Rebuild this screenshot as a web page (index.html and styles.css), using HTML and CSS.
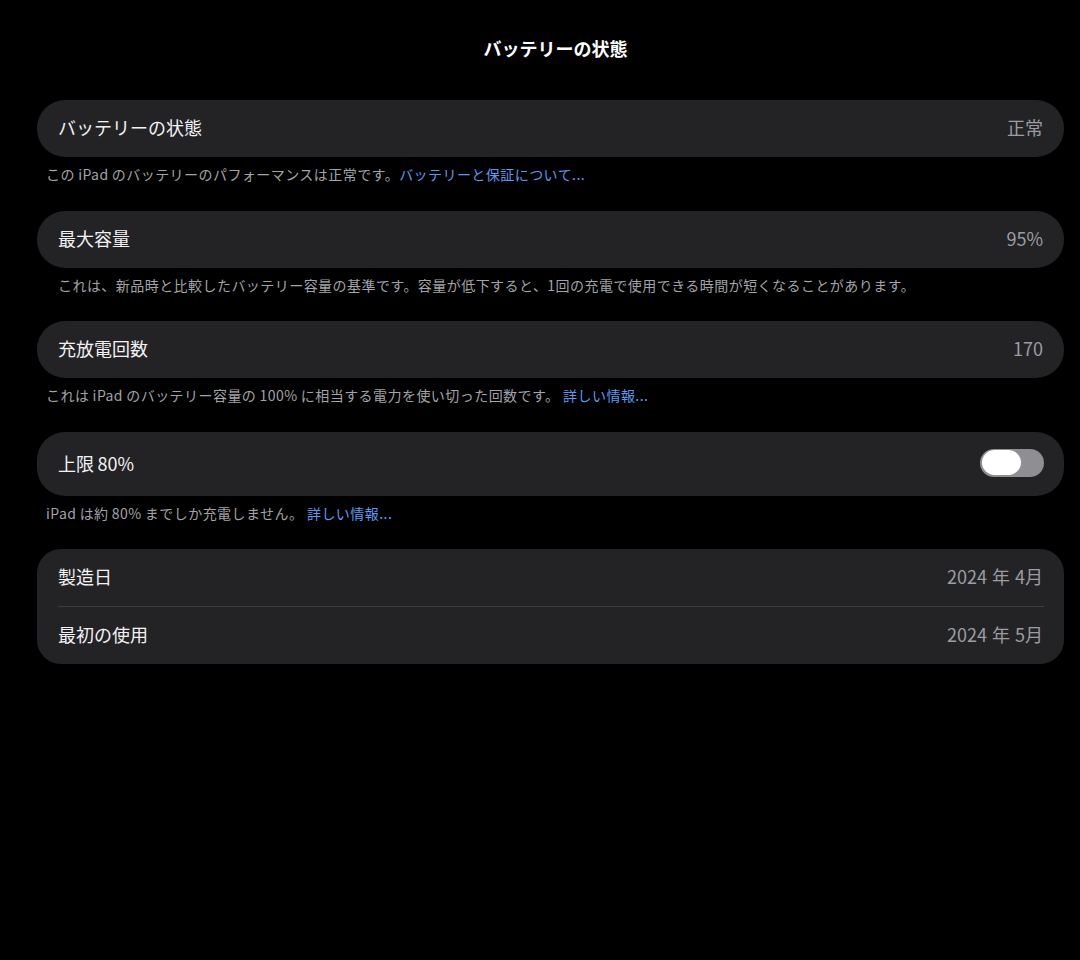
FILE: index.html
```html
<!DOCTYPE html>
<html lang="ja">
<head>
<meta charset="utf-8">
<title>バッテリーの状態</title>
<link rel="stylesheet" href="styles.css">
</head>
<body>
<div class="page">
  <h1 class="title">バッテリーの状態</h1>

  <section class="group">
    <div class="card">
      <div class="row"><span class="label">バッテリーの状態</span><span class="value">正常</span></div>
    </div>
    <p class="footer">この&thinsp;iPad&thinsp;のバッテリーのパフォーマンスは正常です。<a class="link">バッテリーと保証について...</a></p>
  </section>

  <section class="group">
    <div class="card">
      <div class="row"><span class="label">最大容量</span><span class="value">95%</span></div>
    </div>
    <p class="footer indent">これは、新品時と比較したバッテリー容量の基準です。容量が低下すると、1回の充電で使用できる時間が短くなることがあります。</p>
  </section>

  <section class="group">
    <div class="card">
      <div class="row"><span class="label">充放電回数</span><span class="value">170</span></div>
    </div>
    <p class="footer">これは&thinsp;iPad&thinsp;のバッテリー容量の&thinsp;100%&thinsp;に相当する電力を使い切った回数です。 <a class="link">詳しい情報...</a></p>
  </section>

  <section class="group">
    <div class="card">
      <div class="row tall"><span class="label">上限&thinsp;80%</span><span class="toggle"><span class="knob"></span></span></div>
    </div>
    <p class="footer">iPad&thinsp;は約&thinsp;80%&thinsp;までしか充電しません。 <a class="link">詳しい情報...</a></p>
  </section>

  <section class="group">
    <div class="card list">
      <div class="row"><span class="label">製造日</span><span class="value date">2024 年 4月</span></div>
      <div class="sep"></div>
      <div class="row"><span class="label">最初の使用</span><span class="value date">2024 年 5月</span></div>
    </div>
  </section>
</div>
</body>
</html>
```

FILE: styles.css
```css
html, body {
  margin: 0;
  padding: 0;
  background: #000;
}
body {
  font-family: "Noto Sans CJK JP", "Noto Sans", sans-serif;
  color: #f2f2f4;
  width: 1080px;
  height: 960px;
}
.page {
  padding: 36px 16px 0 37px;
}
.title {
  margin: 0 0 40px 0;
  padding-left: 10px;
  font-size: 18px;
  line-height: 24px;
  font-weight: 700;
  text-align: center;
  color: #fff;
}
.group {
  margin-bottom: 25.5px;
}
.card {
  background: #232326;
  border-radius: 28px;
}
.card.list {
  border-radius: 24px;
}
.row {
  height: 57px;
  display: flex;
  align-items: center;
  justify-content: space-between;
  padding: 0 21px 3px 21px;
  box-sizing: border-box;
}
.row.tall {
  height: 64px;
  padding-right: 20px;
  padding-bottom: 2px;
}
.label {
  font-size: 18px;
  color: #f2f2f4;
}
.value {
  font-size: 18px;
  color: #9c9ca2;
}
.value.date {
  word-spacing: 1px;
}
.sep {
  height: 1px;
  background: #3c3c42;
  margin: 0 20px 0 21px;
}
.footer {
  margin: 8px 0 0 0;
  padding-left: 9px;
  font-size: 14px;
  line-height: 19px;
  padding-bottom: 1px;
  letter-spacing: 0.45px;
  color: #a3a3a8;
}
.footer.indent {
  padding-left: 21px;
}
.link {
  color: #5e9af0;
}
.toggle {
  width: 64px;
  height: 28px;
  border-radius: 14px;
  background: #8e8e93;
  display: flex;
  align-items: center;
  padding-left: 2px;
  box-sizing: border-box;
}
.knob {
  width: 39px;
  height: 25px;
  border-radius: 13px;
  background: #fff;
}
```
